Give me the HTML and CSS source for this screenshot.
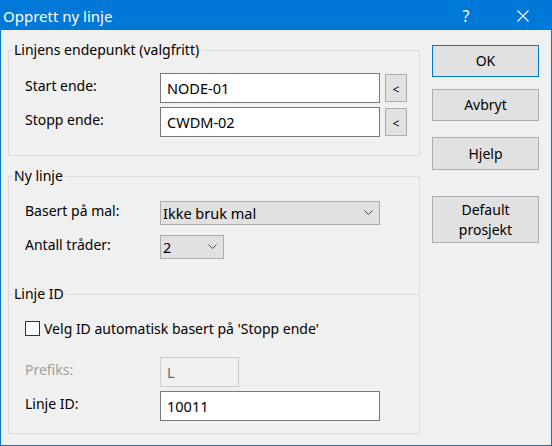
FILE: index.html
```html
<!DOCTYPE html>
<html lang="no">
<head>
    <meta charset="UTF-8">
    <title>Opprett ny linje</title>
    <link rel="stylesheet" href="styles.css">
</head>
<body>
    <div class="window">
        <div class="titlebar">
            <span class="title">Opprett ny linje</span>
            <span class="cap-btn help">?</span>
            <span class="cap-btn close">
                <svg width="12" height="12" viewBox="0 0 12 12"><path d="M0.5 0.5 L11.5 11.5 M11.5 0.5 L0.5 11.5" stroke="#fff" stroke-width="1.1" fill="none"/></svg>
            </span>
        </div>
        <div class="body">
            <div class="left">
                <fieldset class="group first">
                    <legend>Linjens endepunkt (valgfritt)</legend>
                    <div class="row field-row">
                        <span class="label">Start ende:</span>
                        <div class="textbox wide">NODE-01</div>
                        <div class="pick">&lt;</div>
                    </div>
                    <div class="row field-row">
                        <span class="label">Stopp ende:</span>
                        <div class="textbox wide">CWDM-02</div>
                        <div class="pick">&lt;</div>
                    </div>
                </fieldset>

                <fieldset class="group second">
                    <legend>Ny linje</legend>
                    <div class="row combo-row">
                        <span class="label">Basert på mal:</span>
                        <div class="combo wide">Ikke bruk mal<span class="chev"><svg width="9" height="5" viewBox="0 0 9 5"><path d="M0.5 0.5 L4.5 4.5 L8.5 0.5" stroke="#444" stroke-width="1" fill="none"/></svg></span></div>
                    </div>
                    <div class="row combo-row">
                        <span class="label">Antall tråder:</span>
                        <div class="combo small">2<span class="chev"><svg width="9" height="5" viewBox="0 0 9 5"><path d="M0.5 0.5 L4.5 4.5 L8.5 0.5" stroke="#444" stroke-width="1" fill="none"/></svg></span></div>
                    </div>

                    <fieldset class="subgroup">
                        <legend>Linje ID</legend>
                        <div class="check-row">
                            <span class="checkbox"></span>
                            <span>Velg ID automatisk basert på 'Stopp ende'</span>
                        </div>
                        <div class="row field-row prefix-row">
                            <span class="label disabled">Prefiks:</span>
                            <div class="textbox short off">L</div>
                        </div>
                        <div class="row field-row">
                            <span class="label">Linje ID:</span>
                            <div class="textbox wide">10011</div>
                        </div>
                    </fieldset>
                </fieldset>
            </div>

            <div class="buttons">
                <div class="btn default">OK</div>
                <div class="btn cancel">Avbryt</div>
                <div class="btn help-btn">Hjelp</div>
                <div class="btn tall">Default<br>prosjekt</div>
            </div>
        </div>
    </div>
</body>
</html>
```

FILE: styles.css
```css
body {
    margin: 0;
    font-family: "Noto Sans", "Open Sans", sans-serif;
    font-size: 14px;
    color: #000;
    overflow: hidden;
}
.window {
    width: 552px;
    height: 446px;
    box-sizing: border-box;
    border: 1px solid #0078d7;
    background-color: #f0f0f0;
    display: flex;
    flex-direction: column;
}
.titlebar {
    height: 29px;
    background-color: #0078d7;
    color: white;
    display: flex;
    align-items: center;
    padding-left: 2px;
}
.title {
    font-size: 15px;
    flex: 1;
}
.cap-btn {
    display: flex;
    align-items: center;
    justify-content: center;
    height: 29px;
}
.help {
    width: 70px;
    font-size: 16px;
}
.close {
    width: 44px;
    margin-right: 6px;
}
.body {
    display: flex;
    align-items: flex-start;
}
.left {
    width: 412px;
    margin-left: 7px;
}
.group {
    margin: 0;
    padding: 0;
    min-width: 0;
    border: 1px solid #dcdcdc;
}
.group legend,
.subgroup legend {
    margin-left: 3px;
    padding: 0 2px;
    line-height: 20px;
}
.first {
    margin-top: 10px;
    padding-top: 13px;
    padding-bottom: 18px;
}
.second {
    margin-top: 10px;
    padding-top: 15px;
}
.row {
    display: flex;
    align-items: center;
    padding-left: 16px;
}
.label {
    width: 135px;
    padding-bottom: 5px;
}
.label.disabled {
    color: #a0a0a0;
}
.field-row {
    height: 30px;
}
.field-row + .field-row {
    margin-top: 4px;
}
.textbox {
    height: 30px;
    box-sizing: border-box;
    border: 1px solid #7a7a7a;
    background: white;
    padding-left: 6px;
    display: flex;
    align-items: center;
    font-size: 14.5px;
}
.wide {
    width: 220px;
}
.short {
    width: 79px;
}
.textbox.off {
    background: #f0f0f0;
    border-color: #cccccc;
    color: #6d6d6d;
}
.pick {
    width: 22px;
    height: 28px;
    box-sizing: border-box;
    margin-left: 5px;
    border: 1px solid #adadad;
    background: #e1e1e1;
    font-size: 12px;
    display: flex;
    align-items: center;
    justify-content: center;
    padding-top: 3px;
}
.combo-row {
    height: 24px;
}
.combo-row + .combo-row {
    margin-top: 10px;
}
.combo {
    height: 24px;
    box-sizing: border-box;
    border: 1px solid #adadad;
    background: #e1e1e1;
    padding-left: 2px;
    display: flex;
    align-items: center;
    position: relative;
    font-size: 14.5px;
}
.combo.small {
    width: 64px;
}
.chev {
    position: absolute;
    right: 6px;
    top: 8px;
    display: flex;
}
.subgroup {
    margin: 25px 0 0 0;
    padding: 14px 0 12px 0;
    min-width: 0;
    border: none;
    border-top: 1px solid #dcdcdc;
}
.check-row {
    display: flex;
    align-items: center;
    height: 20px;
    padding-left: 16px;
}
.checkbox {
    width: 13px;
    height: 13px;
    border: 1px solid #333;
    background: white;
    margin-right: 4px;
}
.prefix-row {
    margin-top: 19px;
}
.buttons {
    width: 107px;
    margin-left: 12px;
    margin-top: 15px;
    display: flex;
    flex-direction: column;
}
.btn {
    height: 32px;
    box-sizing: border-box;
    border: 1px solid #adadad;
    background: #e1e1e1;
    display: flex;
    align-items: center;
    justify-content: center;
    text-align: center;
    line-height: 20px;
}
.btn.default {
    border-color: #0078d7;
}
.cancel {
    margin-top: 12px;
}
.help-btn {
    margin-top: 16px;
    height: 33px;
}
.tall {
    margin-top: 26px;
    height: 47px;
}
```
